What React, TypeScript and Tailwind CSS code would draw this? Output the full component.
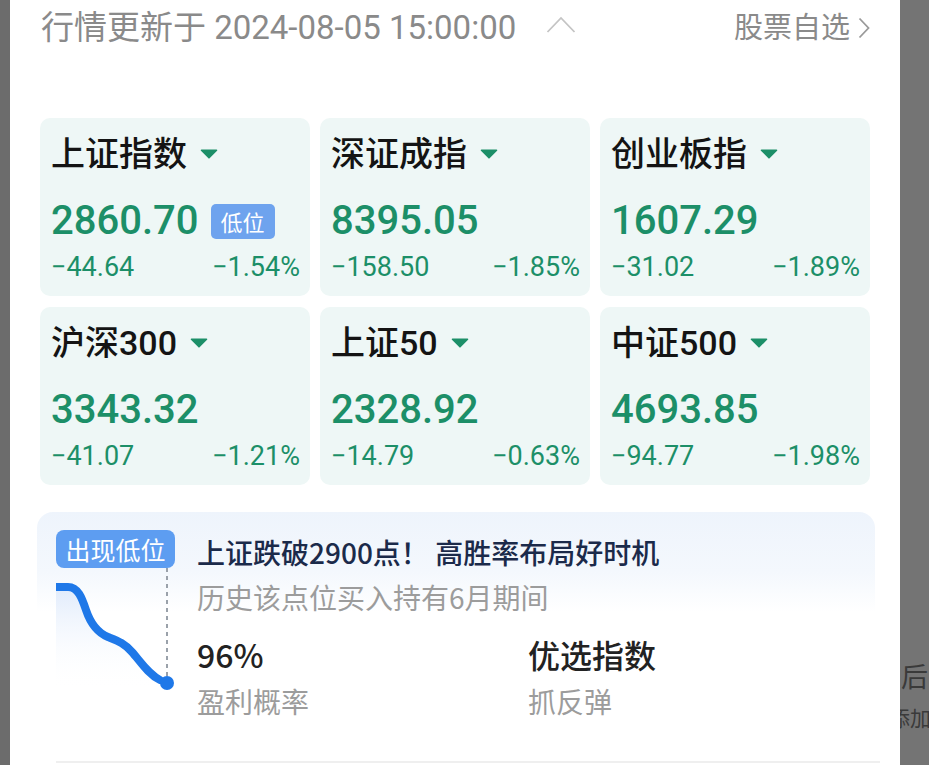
import React from "react";

type Card = { name: string; value: string; chg: string; pct: string; badge?: boolean };

const cards: Card[] = [
  { name: "上证指数", value: "2860.70", chg: "−44.64", pct: "−1.54%", badge: true },
  { name: "深证成指", value: "8395.05", chg: "−158.50", pct: "−1.85%" },
  { name: "创业板指", value: "1607.29", chg: "−31.02", pct: "−1.89%" },
  { name: "沪深300", value: "3343.32", chg: "−41.07", pct: "−1.21%" },
  { name: "上证50", value: "2328.92", chg: "−14.79", pct: "−0.63%" },
  { name: "中证500", value: "4693.85", chg: "−94.77", pct: "−1.98%" },
];

function Tri() {
  return (
    <svg className="ml-[13px] shrink-0" width="18" height="10" viewBox="0 0 18 10">
      <path d="M1.5 1.2 H16.5 L9 8.8 Z" fill="#1c8f68" stroke="#1c8f68" strokeWidth="1.6" strokeLinejoin="round" />
    </svg>
  );
}

function IndexCard({ c }: { c: Card }) {
  return (
    <div className="h-[178px] rounded-[10px] bg-[#eef7f6] pl-[11px] pr-[10px] pt-[16px]">
      <div className="flex items-center h-[40px]">
        <span className="text-[34px] leading-[40px] font-medium text-[#141414] whitespace-nowrap">{c.name}</span>
        <Tri />
      </div>
      <div className="flex items-center mt-[23px] h-[48px]">
        <span className="text-[40px] leading-[48px] font-medium text-[#1c8f68]">{c.value}</span>
        {c.badge && (
          <span className="ml-[12px] h-[35px] w-[64px] rounded-[5px] bg-[#6ea3ee] text-white text-[22px] leading-[35px] text-center font-['Noto_Sans_CJK_SC',sans-serif]">
            低位
          </span>
        )}
      </div>
      <div className="flex justify-between mt-[6px] text-[27px] leading-[32px] text-[#1c8f68]">
        <span>{c.chg}</span>
        <span>{c.pct}</span>
      </div>
    </div>
  );
}

export default function App() {
  return (
    <div className="flex w-[929px] h-[765px] overflow-hidden bg-[#747474] font-['Roboto','Noto_Sans_CJK_SC',sans-serif]">
      <div className="w-[10px] shrink-0 bg-[#6c6c6c]" />
      <div className="w-[890px] shrink-0 bg-white flex flex-col">
        <header className="flex items-center justify-between pl-[31px] pr-[30px] pt-[8px] h-[48px]">
          <div className="flex items-center text-[#8a8a8a]">
            <span className="text-[33px] leading-[40px] whitespace-nowrap">行情更新于 2024-08-05 15:00:00</span>
            <svg className="ml-[30px] -mt-[7px]" width="30" height="17" viewBox="0 0 30 17">
              <polyline points="1.5,16 15,2 28.5,16" fill="none" stroke="#c4c4c4" strokeWidth="1.8" />
            </svg>
          </div>
          <div className="flex items-center text-[#8a8a8a]">
            <span className="text-[29px] leading-[40px] whitespace-nowrap">股票自选</span>
            <svg className="ml-[8px]" width="12" height="22" viewBox="0 0 12 22">
              <polyline points="1.5,1.5 10.5,11 1.5,20.5" fill="none" stroke="#9a9a9a" strokeWidth="1.8" />
            </svg>
          </div>
        </header>

        <div className="mt-[70px] px-[30px] grid grid-cols-3 gap-x-[10px] gap-y-[11px]">
          {cards.map((c) => (
            <IndexCard key={c.name} c={c} />
          ))}
        </div>

        <div className="mt-[27px] ml-[27px] mr-[25px] h-[245px] shrink-0 rounded-t-[16px] bg-[linear-gradient(180deg,#eef4fc_0px,#f4f8fd_60px,#ffffff_100px)] flex pl-[19px] pt-[18px] font-['Noto_Sans_CJK_SC',sans-serif]">
          <div className="w-[124px] shrink-0 flex flex-col">
            <div className="w-[119px] h-[38px] rounded-[8px] bg-[#5d9df1] text-white text-[25px] leading-[38px] text-center">
              出现低位
            </div>
            <svg width="124" height="130" viewBox="0 0 124 130">
              <defs>
                <linearGradient id="fillg" x1="0" y1="0" x2="0" y2="1">
                  <stop offset="0" stopColor="#dde9fb" stopOpacity="0.9" />
                  <stop offset="1" stopColor="#ffffff" stopOpacity="0" />
                </linearGradient>
              </defs>
              <path
                d="M0,19 L12,19 C22,19 26,30 30,42 C34,54 40,64 52,69 C62,73 68,75 76,84 C84,93 92,106 104,112 L104,122 L0,122 Z"
                fill="url(#fillg)"
              />
              <line x1="111" y1="0" x2="111" y2="108" stroke="#9aa1aa" strokeWidth="2" strokeDasharray="4 4" />
              <path
                d="M0,19 L12,19 C22,19 26,30 30,42 C34,54 40,64 52,69 C62,73 68,75 76,84 C84,93 92,106 104,112"
                fill="none"
                stroke="#1f78e8"
                strokeWidth="8"
                strokeLinecap="round"
              />
              <circle cx="111" cy="115" r="7" fill="#1f78e8" />
            </svg>
          </div>
          <div className="ml-[17px] flex-1 pt-[4px]">
            <div className="text-[28px] leading-[36px] font-medium text-[#1b2a4a] whitespace-nowrap">
              上证跌破2900点！ 高胜率布局好时机
            </div>
            <div className="mt-[9px] text-[28px] leading-[36px] text-[#9c9c9c] whitespace-nowrap">历史该点位买入持有6月期间</div>
            <div className="mt-[19px] grid grid-cols-[331px_1fr]">
              <div>
                <div className="text-[32px] leading-[40px] font-medium text-[#222222]">96%</div>
                <div className="mt-[9px] text-[28px] leading-[36px] text-[#9c9c9c]">盈利概率</div>
              </div>
              <div>
                <div className="text-[32px] leading-[40px] font-medium text-[#222222]">优选指数</div>
                <div className="mt-[9px] text-[28px] leading-[36px] text-[#9c9c9c]">抓反弹</div>
              </div>
            </div>
          </div>
        </div>
        <div className="mt-[4px] ml-[46px] mr-[20px] h-[2px] shrink-0 bg-[#efefef]" />
      </div>
      <div className="w-[29px] shrink-0 bg-[#747474] overflow-hidden pt-[660px] font-['Noto_Sans_CJK_SC',sans-serif]">
        <div className="ml-[1px] text-[27px] leading-[32px] text-[#3a3a3a] whitespace-nowrap">后</div>
        <div className="-ml-[11px] mt-[12px] text-[21px] leading-[26px] text-[#3a3a3a] whitespace-nowrap">添加自选</div>
      </div>
    </div>
  );
}
